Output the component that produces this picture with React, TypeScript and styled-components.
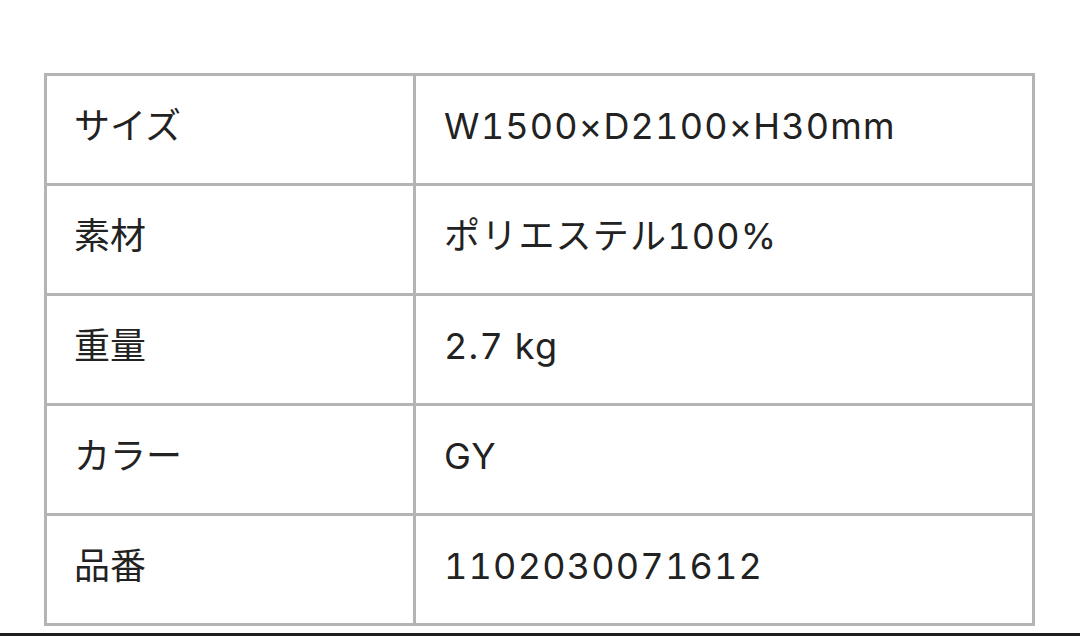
import React from "react";
import styled, { createGlobalStyle } from "styled-components";

const Global = createGlobalStyle`
  html, body { margin: 0; padding: 0; background: #ffffff; }
  body { font-family: "Inter", "Noto Sans CJK JP", sans-serif; color: #222222; }
`;

const Page = styled.div`
  width: 1080px;
  height: 636px;
  box-sizing: border-box;
  padding: 73px 45px 0 44px;
  display: flex;
  flex-direction: column;
  overflow: hidden;
`;

const Spec = styled.div`
  display: grid;
  grid-template-columns: 366px 616px;
  grid-auto-rows: 107px;
  gap: 3px;
  padding: 3px;
  background: #b4b4b4;
  width: max-content;
`;

const Cell = styled.div<{ $label?: boolean }>`
  background: #ffffff;
  display: flex;
  align-items: center;
  padding-left: ${(p) => (p.$label ? "27px" : "28px")};
  padding-bottom: 7px;
  font-family: "Inter", "Noto Sans CJK JP", sans-serif;
  font-size: 36px;
  font-variant-numeric: tabular-nums;
  letter-spacing: ${(p) => (p.$label ? "0" : "1.2px")};
  line-height: 1;
  color: #222222;
  white-space: nowrap;
`;

const Rule = styled.div`
  margin-top: auto;
  margin-left: -44px;
  margin-right: -45px;
  height: 3px;
  background: #1e1e1e;
`;

const rows: [string, string][] = [
  ["サイズ", "W1500×D2100×H30mm"],
  ["素材", "ポリエステル100%"],
  ["重量", "2.7 kg"],
  ["カラー", "GY"],
  ["品番", "1102030071612"],
];

export default function App() {
  return (
    <>
      <Global />
      <Page>
        <Spec>
          {rows.map(([k, v]) => (
            <React.Fragment key={k}>
              <Cell $label>{k}</Cell>
              <Cell>{v}</Cell>
            </React.Fragment>
          ))}
        </Spec>
        <Rule />
      </Page>
    </>
  );
}
